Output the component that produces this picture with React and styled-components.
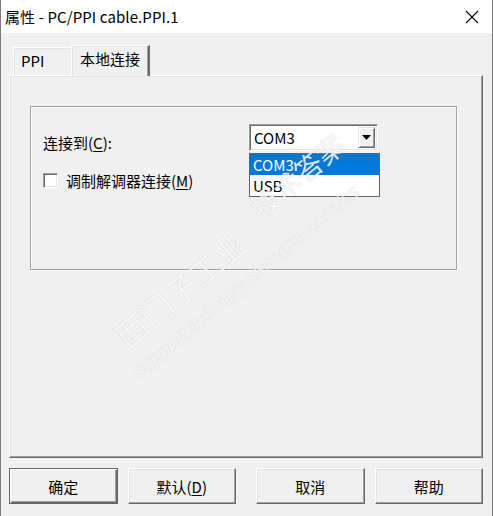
import React from "react";
import styled, { createGlobalStyle } from "styled-components";

const Global = createGlobalStyle`
  html, body {
    margin: 0;
    padding: 0;
    background: #f0f0f0;
  }
  body {
    font-family: "Noto Sans CJK SC", "Noto Sans", sans-serif;
  }
`;

// 窗口外框
const Window = styled.div`
  position: relative;
  width: 493px;
  height: 516px;
  box-sizing: border-box;
  border-left: 1px solid #7a7a7a;
  border-right: 1px solid #7a7a7a;
  background: #f0f0f0;
  display: flex;
  flex-direction: column;
  overflow: hidden;
  font-size: 15px;
  color: #000;
`;

const TitleBar = styled.div`
  height: 33px;
  background: #fff;
  display: flex;
  align-items: center;
  justify-content: space-between;
  padding: 0 13px 0 4px;
  font-size: 15px;
  letter-spacing: 0.1px;
`;

const Body = styled.div`
  flex: 1;
  display: flex;
  flex-direction: column;
  padding: 11px 9px 0 8px;
`;

// 选项卡
const TabStrip = styled.div`
  display: flex;
  align-items: flex-end;
  height: 31px;
  padding-left: 4px;
`;

const Tab = styled.div`
  box-sizing: border-box;
  width: ${(p) => p.$w}px;
  height: ${(p) => (p.$active ? 31 : 28)}px;
  margin-left: ${(p) => (p.$active ? -1 : 0)}px;
  padding: ${(p) => (p.$active ? "2px 0 0 8px" : "2px 0 0 7px")};
  border-top: 1px solid #fff;
  border-left: 1px solid #fff;
  border-right: ${(p) => (p.$active ? "2px solid #696969" : "1px solid #a0a0a0")};
  box-shadow: ${(p) => (p.$active ? "inset -1px 0 #a0a0a0, inset 1px 1px #e3e3e3" : "inset 1px 1px #e3e3e3")};
  background: #f0f0f0;
  position: relative;
  z-index: ${(p) => (p.$active ? 2 : 1)};
  margin-bottom: ${(p) => (p.$active ? -1 : 0)}px;
  line-height: 22px;
`;

const TabPanel = styled.div`
  box-sizing: border-box;
  height: 383px;
  border-top: 1px solid #fff;
  border-left: 1px solid #fff;
  border-right: 1px solid #696969;
  border-bottom: 1px solid #696969;
  box-shadow: inset -1px -1px #a0a0a0, inset 1px 1px #e3e3e3;
  padding: 30px 25px 0 20px;
`;

// 分组框
const Frame = styled.div`
  position: relative;
  box-sizing: border-box;
  height: 164px;
  border: 1px solid #a0a0a0;
  box-shadow: 1px 1px #fff, inset 1px 1px #fff;
  padding: 17px 0 0 12px;
`;

const FieldRow = styled.div`
  display: flex;
  align-items: center;
  height: 27px;
`;

const FieldLabel = styled.div`
  width: 206px;
  padding-top: 9px;
`;

const Combo = styled.div`
  position: relative;
  box-sizing: border-box;
  width: 129px;
  height: 27px;
  background: #fff;
  border: 1px solid;
  border-color: #a0a0a0 #fff #fff #a0a0a0;
  box-shadow: inset 1px 1px #696969, inset -1px -1px #e3e3e3;
  display: flex;
  align-items: center;
  padding-left: 4px;
`;

const ComboArrow = styled.div`
  position: absolute;
  right: 2px;
  top: 2px;
  width: 17px;
  height: 21px;
  box-sizing: border-box;
  background: #f0f0f0;
  border: 1px solid;
  border-color: #e3e3e3 #696969 #696969 #e3e3e3;
  box-shadow: inset 1px 1px #fff, inset -1px -1px #a0a0a0;
  display: flex;
  align-items: center;
  justify-content: center;
`;

const DropList = styled.div`
  position: absolute;
  left: 218px;
  top: 46px;
  width: 131px;
  box-sizing: border-box;
  border: 1px solid #646464;
  background: #fff;
  z-index: 5;
`;

const DropItem = styled.div`
  height: 21px;
  line-height: 21px;
  padding-left: 3px;
  background: ${(p) => (p.$selected ? "#0078d7" : "#fff")};
  color: ${(p) => (p.$selected ? "#fff" : "#000")};
`;

const CheckRow = styled.div`
  display: flex;
  align-items: center;
  margin-top: 19px;
  gap: 8px;
`;

const CheckBox = styled.div`
  box-sizing: border-box;
  width: 15px;
  height: 15px;
  background: #fff;
  border: 1px solid;
  border-color: #a0a0a0 #fff #fff #a0a0a0;
  box-shadow: inset 1px 1px #696969, inset -1px -1px #e3e3e3;
`;

const Key = styled.span`
  text-decoration: underline;
  text-underline-offset: 2px;
`;

// 底部按钮
const ButtonRow = styled.div`
  display: flex;
  gap: 10px;
  margin-top: 10px;
`;

const Button = styled.div`
  box-sizing: border-box;
  width: 109px;
  height: 36px;
  margin-left: ${(p) => (p.$spaced ? 10 : 0)}px;
  display: flex;
  align-items: center;
  justify-content: center;
  background: #f0f0f0;
  border: 1px solid;
  border-color: ${(p) => (p.$default ? "#646464" : "#fff #696969 #696969 #fff")};
  box-shadow: ${(p) =>
    p.$default
      ? "inset 1px 1px #fff, inset -1px -1px #696969, inset -2px -2px #a0a0a0"
      : "inset -1px -1px #a0a0a0, inset 1px 1px #e3e3e3"};
`;

// 水印 ($x, $y = 文字左下角)
const Watermark = styled.div`
  position: absolute;
  left: ${(p) => p.$x}px;
  top: ${(p) => p.$y - p.$size}px;
  height: ${(p) => p.$size}px;
  line-height: ${(p) => p.$size}px;
  transform: rotate(${(p) => p.$angle || -40}deg);
  transform-origin: left bottom;
  white-space: nowrap;
  font-size: ${(p) => p.$size}px;
  font-style: ${(p) => (p.$italic ? "italic" : "normal")};
  color: rgba(255, 255, 255, 0.85);
  text-shadow: 0 0 1px rgba(0, 0, 0, 0.2);
  pointer-events: none;
  z-index: 10;
  font-family: ${(p) => (p.$italic ? '"Liberation Sans", sans-serif' : '"Noto Sans CJK SC", sans-serif')};
`;

function CloseIcon() {
  return (
    <svg width="14" height="14" viewBox="0 0 14 14">
      <path d="M1 1 L13 13 M13 1 L1 13" stroke="#000" strokeWidth="1.1" />
    </svg>
  );
}

function ArrowDown() {
  return (
    <svg width="9" height="5" viewBox="0 0 9 5">
      <path d="M0 0 H9 L4.5 5 Z" fill="#000" />
    </svg>
  );
}

export default function App() {
  return (
    <>
      <Global />
      <Window>
        <TitleBar>
          <span>属性 - PC/PPI cable.PPI.1</span>
          <CloseIcon />
        </TitleBar>
        <Body>
          <TabStrip>
            <Tab $w={59}>PPI</Tab>
            <Tab $w={79} $active>本地连接</Tab>
          </TabStrip>
          <TabPanel>
            <Frame>
              <FieldRow>
                <FieldLabel>
                  连接到(<Key>C</Key>):
                </FieldLabel>
                <Combo>
                  COM3
                  <ComboArrow>
                    <ArrowDown />
                  </ComboArrow>
                </Combo>
              </FieldRow>
              <CheckRow>
                <CheckBox />
                <span>
                  调制解调器连接(<Key>M</Key>)
                </span>
              </CheckRow>
              <DropList>
                <DropItem $selected>COM3</DropItem>
                <DropItem>USB</DropItem>
              </DropList>
            </Frame>
          </TabPanel>
          <ButtonRow>
            <Button $default>确定</Button>
            <Button>
              默认(<Key>D</Key>)
            </Button>
            <Button $spaced>取消</Button>
            <Button>帮助</Button>
          </ButtonRow>
        </Body>
        <Watermark $x={128} $y={352} $size={32}>西门子工业</Watermark>
        <Watermark $x={140} $y={382} $size={20} $italic>support.industry.siemens.com/cs</Watermark>
        <Watermark $x={262} $y={222} $size={28}>技术答案</Watermark>
      </Window>
    </>
  );
}
